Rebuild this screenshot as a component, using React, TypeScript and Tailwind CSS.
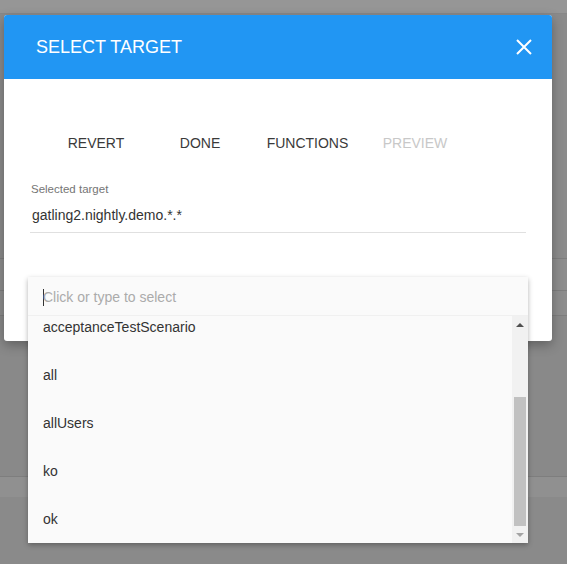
import React from "react";

const items = ["acceptanceTestScenario", "all", "allUsers", "ko", "ok"];

const actions: { label: string; width: string; disabled?: boolean }[] = [
  { label: "REVERT", width: "w-[104px]" },
  { label: "DONE", width: "w-[104px]" },
  { label: "FUNCTIONS", width: "w-[111px]" },
  { label: "PREVIEW", width: "w-[104px]", disabled: true },
];

const CloseIcon = () => (
  <svg width="16" height="16" viewBox="0 0 16 16" fill="none">
    <path d="M1 1L15 15M15 1L1 15" stroke="white" strokeWidth="2" />
  </svg>
);

const Scrollbar = () => (
  <div className="flex w-[16px] shrink-0 flex-col bg-[#f1f1f1]">
    <div className="flex h-[17px] items-center justify-center">
      <div className="h-0 w-0 border-x-[4px] border-b-[4px] border-x-transparent border-b-[#505050]" />
    </div>
    <div className="flex flex-1 flex-col px-[2px]">
      <div className="h-[64px]" />
      <div className="flex-1 bg-[#c1c1c1]" />
    </div>
    <div className="flex h-[17px] items-center justify-center">
      <div className="h-0 w-0 border-x-[4px] border-t-[4px] border-x-transparent border-t-[#a3a3a3]" />
    </div>
  </div>
);

export default function App() {
  return (
    <div
      className="relative h-[564px] w-[567px] overflow-hidden bg-[#8a8a8a]"
      style={{ fontFamily: '"Liberation Sans", Arial, sans-serif' }}
    >
      {/* page under the overlay */}
      <div className="flex flex-col">
        <div className="h-[14px] border-b border-[#888] bg-[#969696]" />
        <div className="h-[245px] border-b border-[#7e7e7e] bg-[#8b8b8b]" />
        <div className="h-[32px] border-b border-[#7e7e7e] bg-[#8d8d8d]" />
        <div className="h-[25px] border-b border-[#7e7e7e] bg-[#8d8d8d]" />
        <div className="h-[161px] border-b border-[#7e7e7e] bg-[#898989]" />
        <div className="h-[20px] bg-[#909090]" />
      </div>

      {/* dialog */}
      <div className="absolute left-[4px] top-[15px] flex h-[326px] w-[548px] flex-col overflow-hidden rounded-[3px] bg-white shadow-[0_4px_12px_rgba(0,0,0,0.3)]">
        <div className="flex h-[64px] shrink-0 items-center justify-between bg-[#2196f3] pl-[32px] pr-[20px]">
          <h2 className="text-[18px] leading-none text-white">SELECT TARGET</h2>
          <CloseIcon />
        </div>

        <div className="flex flex-col px-[26px]">
          <div className="mt-[46px] flex h-[36px] items-center pl-[14px]">
            {actions.map((a) => (
              <button
                key={a.label}
                className={`${a.width} text-center text-[14px] ${
                  a.disabled ? "text-[#c8c8c8]" : "text-[#3a3a3a]"
                }`}
              >
                {a.label}
              </button>
            ))}
          </div>

          <label className="mt-[21px] pl-[1px] text-[11.5px] leading-[14px] text-[#757575]">
            Selected target
          </label>
          <div className="mt-[11px] w-[496px] border-b border-[#e0e0e0] pb-[9px] pl-[2px] text-[14px] leading-[16px] text-[#333]">
            gatling2.nightly.demo.*.*
          </div>
        </div>
      </div>

      {/* select dropdown */}
      <div className="absolute left-[28px] top-[277px] flex h-[266px] w-[500px] flex-col bg-[#fafafa] shadow-[0_2px_5px_rgba(0,0,0,0.3)]">
        <div className="flex h-[39px] shrink-0 items-center border-b border-[#f0f0f0] pl-[15px] pt-[2px] text-[14px]">
          <span className="mr-[-1px] h-[17px] w-px bg-[#333]" />
          <span className="text-[#ababab]">Click or type to select</span>
        </div>
        <div className="flex min-h-0 flex-1">
          <div className="flex-1 overflow-hidden">
            <div className="-mt-[13px]">
              {items.map((it) => (
                <div
                  key={it}
                  className="flex h-[48px] items-center pl-[15px] text-[14px] text-[#333]"
                >
                  {it}
                </div>
              ))}
            </div>
          </div>
          <Scrollbar />
        </div>
      </div>
    </div>
  );
}
